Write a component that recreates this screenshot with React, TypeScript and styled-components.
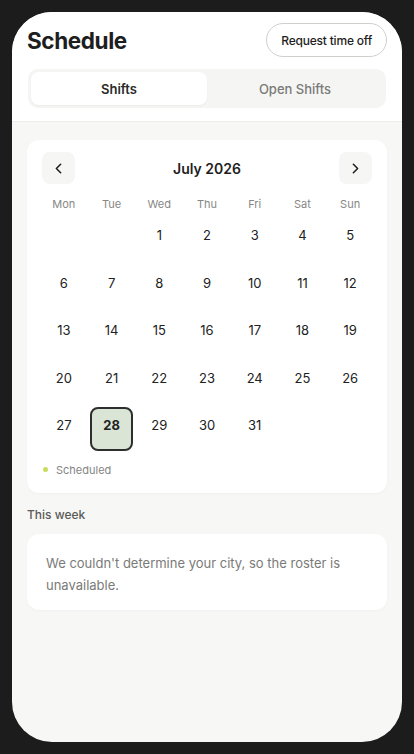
import React, { useState } from 'react'
import styled, { createGlobalStyle } from 'styled-components'
import { ChevronLeft, ChevronRight } from 'lucide-react'

const GlobalStyle = createGlobalStyle`
  html, body {
    margin: 0;
    padding: 0;
    background: #1c1c1c;
  }
  body {
    font-family: Inter, 'Noto Sans', sans-serif;
    -webkit-font-smoothing: antialiased;
  }
  * { box-sizing: border-box; }
`

const Page = styled.div`
  padding: 12px;
  min-height: 754px;
`

const Phone = styled.div`
  width: 390px;
  height: 730px;
  border-radius: 40px;
  overflow: hidden;
  background: #f7f7f5;
  display: flex;
  flex-direction: column;
`

const Header = styled.header`
  background: #fff;
  padding: 11px 16px 13px 15px;
  border-bottom: 1px solid #ececea;
`

const TitleRow = styled.div`
  display: flex;
  align-items: center;
  justify-content: space-between;
`

const Title = styled.h1`
  margin: 0;
  font-size: 22.5px;
  font-weight: 700;
  letter-spacing: -0.4px;
  color: #1e1e1e;
`

const PillButton = styled.button`
  height: 34px;
  padding: 0 14px;
  border-radius: 17px;
  border: 1px solid #cfcfcc;
  background: #fff;
  font-family: inherit;
  font-size: 12px;
  letter-spacing: -0.2px;
  font-weight: 500;
  color: #1e1e1e;
  margin-right: -1px;
`

const Tabs = styled.div`
  margin-top: 12px;
  margin-left: 1px;
  height: 39px;
  padding: 3px;
  border-radius: 10px;
  background: #f5f5f3;
  display: grid;
  grid-template-columns: 1fr 1fr;
`

const Tab = styled.button<{ $active?: boolean }>`
  border: 0;
  border-radius: 8px;
  font-family: inherit;
  font-size: 13px;
  font-weight: ${(p) => (p.$active ? 600 : 500)};
  color: ${(p) => (p.$active ? '#2a2a2a' : '#7a7a78')};
  background: ${(p) => (p.$active ? '#fff' : 'transparent')};
  box-shadow: ${(p) => (p.$active ? '0 1px 2px rgba(0,0,0,0.04)' : 'none')};
`

const Body = styled.main`
  padding: 18px 15px;
  display: flex;
  flex-direction: column;
`

const Card = styled.section`
  background: #fff;
  border-radius: 12px;
  box-shadow: 0 1px 3px rgba(0, 0, 0, 0.03);
`

const CalendarCard = styled(Card)`
  padding: 12px 15px 16px;
`

const NavRow = styled.div`
  display: flex;
  align-items: center;
  justify-content: space-between;
`

const NavButton = styled.button`
  width: 33px;
  height: 32px;
  border: 0;
  border-radius: 8px;
  background: #f6f6f4;
  display: flex;
  align-items: center;
  justify-content: center;
  color: #1e1e1e;
  padding: 0;
`

const MonthLabel = styled.div`
  font-size: 14px;
  font-weight: 600;
  color: #1e1e1e;
`

const Weekdays = styled.div`
  margin-top: 12px;
  display: grid;
  grid-template-columns: repeat(7, 1fr);
  gap: 4px;
`

const Weekday = styled.div`
  height: 16px;
  line-height: 16px;
  text-align: center;
  font-size: 11px;
  color: #878785;
`

const DaysGrid = styled.div`
  margin-top: 5px;
  display: grid;
  grid-template-columns: repeat(7, 1fr);
  grid-auto-rows: 43.5px;
  gap: 4px;
`

const DayCell = styled.div<{ $selected?: boolean }>`
  display: flex;
  flex-direction: column;
  align-items: center;
  justify-content: center;
  gap: 3px;
  border-radius: 8px;
  border: 2px solid ${(p) => (p.$selected ? '#2e2e2e' : 'transparent')};
  background: ${(p) => (p.$selected ? '#dbe5d6' : 'transparent')};
`

const DayNumber = styled.span<{ $selected?: boolean }>`
  font-size: 13px;
  line-height: 18px;
  font-weight: ${(p) => (p.$selected ? 700 : 400)};
  color: #222;
`

const DotSlot = styled.span<{ $on?: boolean }>`
  width: 4px;
  height: 4px;
  border-radius: 50%;
  background: ${(p) => (p.$on ? '#c6de5e' : 'transparent')};
`

const Legend = styled.div`
  margin-top: 12px;
  display: flex;
  align-items: center;
  gap: 8px;
  padding-left: 1px;
  font-size: 11px;
  color: #858583;
  height: 14px;
`

const LegendDot = styled.span`
  width: 5px;
  height: 5px;
  border-radius: 50%;
  background: #c6de5e;
`

const SectionLabel = styled.h2`
  margin: 14px 0 11px;
  font-size: 12px;
  line-height: 16px;
  font-weight: 500;
  color: #5a5a58;
`

const RosterCard = styled(Card)`
  padding: 18px 19px 14px;
  font-size: 13px;
  line-height: 22px;
  color: #7a7a78;
`

const WEEKDAYS = ['Mon', 'Tue', 'Wed', 'Thu', 'Fri', 'Sat', 'Sun']

// July 2026 starts on a Wednesday
const LEADING_BLANKS = 2
const DAYS_IN_MONTH = 31

export default function App() {
  const [tab, setTab] = useState<'shifts' | 'open'>('shifts')
  const [selected, setSelected] = useState(28)

  const cells: (number | null)[] = [
    ...Array(LEADING_BLANKS).fill(null),
    ...Array.from({ length: DAYS_IN_MONTH }, (_, i) => i + 1),
  ]

  return (
    <>
      <GlobalStyle />
      <Page>
        <Phone>
          <Header>
            <TitleRow>
              <Title>Schedule</Title>
              <PillButton>Request time off</PillButton>
            </TitleRow>
            <Tabs>
              <Tab $active={tab === 'shifts'} onClick={() => setTab('shifts')}>
                Shifts
              </Tab>
              <Tab $active={tab === 'open'} onClick={() => setTab('open')}>
                Open Shifts
              </Tab>
            </Tabs>
          </Header>
          <Body>
            <CalendarCard>
              <NavRow>
                <NavButton aria-label="Previous month">
                  <ChevronLeft size={17} strokeWidth={2.2} />
                </NavButton>
                <MonthLabel>July 2026</MonthLabel>
                <NavButton aria-label="Next month">
                  <ChevronRight size={17} strokeWidth={2.2} />
                </NavButton>
              </NavRow>
              <Weekdays>
                {WEEKDAYS.map((d) => (
                  <Weekday key={d}>{d}</Weekday>
                ))}
              </Weekdays>
              <DaysGrid>
                {cells.map((day, i) =>
                  day === null ? (
                    <div key={`blank-${i}`} />
                  ) : (
                    <DayCell
                      key={day}
                      $selected={day === selected}
                      onClick={() => setSelected(day)}
                    >
                      <DayNumber $selected={day === selected}>{day}</DayNumber>
                      <DotSlot />
                    </DayCell>
                  ),
                )}
              </DaysGrid>
              <Legend>
                <LegendDot />
                Scheduled
              </Legend>
            </CalendarCard>
            <SectionLabel>This week</SectionLabel>
            <RosterCard>
              We couldn't determine your city, so the roster is unavailable.
            </RosterCard>
          </Body>
        </Phone>
      </Page>
    </>
  )
}
